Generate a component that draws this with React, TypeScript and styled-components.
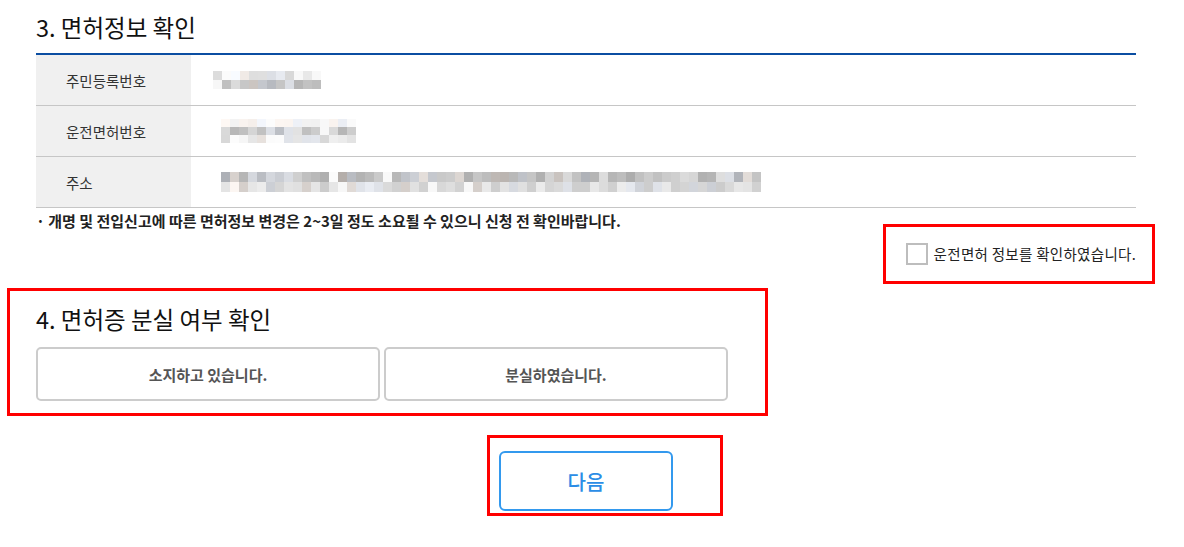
import React from "react";
import styled, { createGlobalStyle } from "styled-components";

const GlobalStyle = createGlobalStyle`
  html, body {
    margin: 0;
    padding: 0;
    background: #ffffff;
  }
  body {
    font-family: "Noto Sans CJK KR", "Noto Sans", sans-serif;
    color: #222;
  }
  * { box-sizing: border-box; }
`;

const Page = styled.div`
  width: 1136px;
  padding: 12px 0 0 36px;
`;

const SectionTitle = styled.h2`
  margin: 0;
  font-size: 23.5px;
  line-height: 30px;
  font-weight: 400;
  color: #111;
`;

const InfoTable = styled.div`
  margin-top: 11px;
  border-top: 2px solid #0b4ea2;
  display: flex;
  flex-direction: column;
`;

const InfoRow = styled.div`
  display: flex;
  height: 51px;
  border-bottom: 1px solid #c6c6c6;
`;

const InfoLabel = styled.div`
  width: 155px;
  flex: none;
  background: #f0f0f0;
  padding-left: 30px;
  display: flex;
  align-items: center;
  font-size: 14.5px;
  color: #333;
`;

const InfoValue = styled.div<{ $indent: number }>`
  flex: 1;
  display: flex;
  align-items: center;
  padding-left: ${(p) => p.$indent}px;
`;

const Mosaic = styled.div<{ $cols: number; $rowH: number }>`
  display: grid;
  grid-template-columns: repeat(${(p) => p.$cols}, 9px);
  grid-auto-rows: ${(p) => p.$rowH}px;
`;

const MosaicCell = styled.span`
  display: block;
`;

const NoticeRow = styled.div`
  display: flex;
  justify-content: space-between;
  align-items: flex-start;
  margin-top: 3px;
`;

const Note = styled.p`
  margin: 0;
  font-size: 15px;
  line-height: 20px;
  font-weight: 700;
  color: #222;
`;

const Highlight = styled.div`
  border: 3px solid #ff0000;
`;

const AgreeBox = styled(Highlight)`
  margin-top: 13px;
  margin-right: -19px;
  height: 60px;
  display: flex;
  align-items: center;
  gap: 6px;
  padding: 0 16px 0 20px;
  cursor: pointer;
`;

const CheckSquare = styled.span`
  width: 22px;
  height: 22px;
  border: 2px solid #bdbdbd;
  background: #fff;
  flex: none;
`;

const AgreeLabel = styled.span`
  font-size: 14.5px;
  line-height: 20px;
  letter-spacing: 0.3px;
  color: #222;
`;

const LossSection = styled(Highlight)`
  margin-top: 4px;
  margin-left: -29px;
  width: 761px;
  padding: 13px 37px 12px 26px;
`;

const ChoiceRow = styled.div`
  display: flex;
  gap: 4px;
  margin-top: 13px;
`;

const ChoiceButton = styled.button`
  width: 344px;
  height: 54px;
  border: 2px solid #cccccc;
  border-radius: 5px;
  background: #fff;
  font-family: inherit;
  font-size: 15px;
  font-weight: 700;
  color: #555;
  cursor: pointer;
  padding: 0;
`;

const NextRow = styled.div`
  display: flex;
  justify-content: center;
  margin-top: 19px;
`;

const NextHighlight = styled(Highlight)`
  margin-left: 38px;
  padding: 13px 47px 2px 9px;
`;

const NextButton = styled.button`
  width: 174px;
  height: 60px;
  border: 2px solid #3399ee;
  border-radius: 6px;
  background: #fff;
  font-family: inherit;
  font-size: 20px;
  font-weight: 500;
  color: #2b8de6;
  cursor: pointer;
  padding: 0;
`;

function makeRand(seed: number) {
  let s = seed >>> 0;
  return () => {
    s = (s * 1664525 + 1013904223) >>> 0;
    return s / 4294967296;
  };
}

type Tone = [number, number];

function mosaicColors(seed: number, cols: number, tones: Tone[], gapChance: number) {
  const rand = makeRand(seed);
  const out: string[] = [];
  tones.forEach(([lo, hi]) => {
    for (let c = 0; c < cols; c++) {
      const gap = rand() < gapChance;
      const g = gap ? 246 + Math.floor(rand() * 8) : Math.round(lo + rand() * (hi - lo));
      const tint = rand();
      let r = g, gg = g, b = g;
      if (tint < 0.18) { b += 6; r -= 3; }
      else if (tint < 0.32) { r += 6; b -= 4; }
      const cl = (v: number) => Math.max(0, Math.min(255, v));
      out.push(`rgb(${cl(r)},${cl(gg)},${cl(b)})`);
    }
  });
  return out;
}

type MosaicSpec = { seed: number; cols: number; rowH: number; tones: Tone[]; gap: number };

function Blurred({ spec, label }: { spec: MosaicSpec; label: string }) {
  const colors = mosaicColors(spec.seed, spec.cols, spec.tones, spec.gap);
  return (
    <Mosaic $cols={spec.cols} $rowH={spec.rowH} role="img" aria-label={label}>
      {colors.map((c, i) => (
        <MosaicCell key={i} style={{ background: c }} />
      ))}
    </Mosaic>
  );
}

const rows: { label: string; indent: number; spec: MosaicSpec }[] = [
  {
    label: "주민등록번호",
    indent: 22,
    spec: { seed: 11, cols: 12, rowH: 9, tones: [[212, 240], [180, 222]], gap: 0.12 },
  },
  {
    label: "운전면허번호",
    indent: 30,
    spec: { seed: 27, cols: 15, rowH: 8, tones: [[238, 252], [180, 226], [214, 240]], gap: 0.12 },
  },
  {
    label: "주소",
    indent: 30,
    spec: { seed: 53, cols: 60, rowH: 10, tones: [[172, 224], [204, 238]], gap: 0.06 },
  },
];

export default function App() {
  return (
    <>
      <GlobalStyle />
      <Page>
        <SectionTitle>3. 면허정보 확인</SectionTitle>
        <InfoTable>
          {rows.map((r) => (
            <InfoRow key={r.label}>
              <InfoLabel>{r.label}</InfoLabel>
              <InfoValue $indent={r.indent}>
                <Blurred spec={r.spec} label={`${r.label} (가림 처리)`} />
              </InfoValue>
            </InfoRow>
          ))}
        </InfoTable>

        <NoticeRow>
          <Note>· 개명 및 전입신고에 따른 면허정보 변경은 2~3일 정도 소요될 수 있으니 신청 전 확인바랍니다.</Note>
          <AgreeBox as="label">
            <CheckSquare />
            <AgreeLabel>운전면허 정보를 확인하였습니다.</AgreeLabel>
          </AgreeBox>
        </NoticeRow>

        <LossSection>
          <SectionTitle>4. 면허증 분실 여부 확인</SectionTitle>
          <ChoiceRow>
            <ChoiceButton type="button">소지하고 있습니다.</ChoiceButton>
            <ChoiceButton type="button">분실하였습니다.</ChoiceButton>
          </ChoiceRow>
        </LossSection>

        <NextRow>
          <NextHighlight>
            <NextButton type="button">다음</NextButton>
          </NextHighlight>
        </NextRow>
      </Page>
    </>
  );
}
